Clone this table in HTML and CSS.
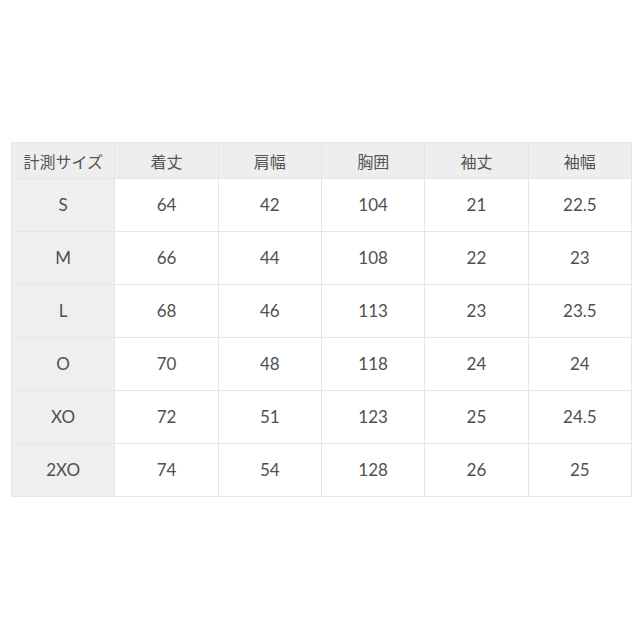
FILE: index.html
```html
<!DOCTYPE html>
<html lang="ja">
<head>
<meta charset="utf-8">
<link rel="stylesheet" href="styles.css">
</head>
<body>
<div class="page">
<table class="size">
<thead>
<tr><th>計測サイズ</th><th>着丈</th><th>肩幅</th><th>胸囲</th><th>袖丈</th><th>袖幅</th></tr>
</thead>
<tbody>
<tr><th>S</th><td>64</td><td>42</td><td>104</td><td>21</td><td>22.5</td></tr>
<tr><th>M</th><td>66</td><td>44</td><td>108</td><td>22</td><td>23</td></tr>
<tr><th>L</th><td>68</td><td>46</td><td>113</td><td>23</td><td>23.5</td></tr>
<tr><th>O</th><td>70</td><td>48</td><td>118</td><td>24</td><td>24</td></tr>
<tr><th>XO</th><td>72</td><td>51</td><td>123</td><td>25</td><td>24.5</td></tr>
<tr><th>2XO</th><td>74</td><td>54</td><td>128</td><td>26</td><td>25</td></tr>
</tbody>
</table>
</div>
</body>
</html>
```
FILE: styles.css
```css
html, body {
  margin: 0;
  padding: 0;
  background: #ffffff;
}
.page {
  padding: 142px 0 0 11px;
}
.size {
  border-collapse: collapse;
  width: 621px;
  table-layout: fixed;
  font-family: "Lato", "Noto Sans CJK JP", sans-serif;
  color: #505050;
}
.size th, .size td {
  border: 1px solid #e6e6e6;
  text-align: center;
  font-weight: normal;
  padding: 0;
}
.size thead th {
  background: #eeeeee;
  height: 35px;
  font-size: 16px;
  font-family: "Noto Sans CJK JP", sans-serif;
  color: #555555;
}
.size tbody th {
  background: #efefef;
}
.size tbody th, .size tbody td {
  height: 52px;
  font-size: 17px;
  line-height: 48px;
}
```
